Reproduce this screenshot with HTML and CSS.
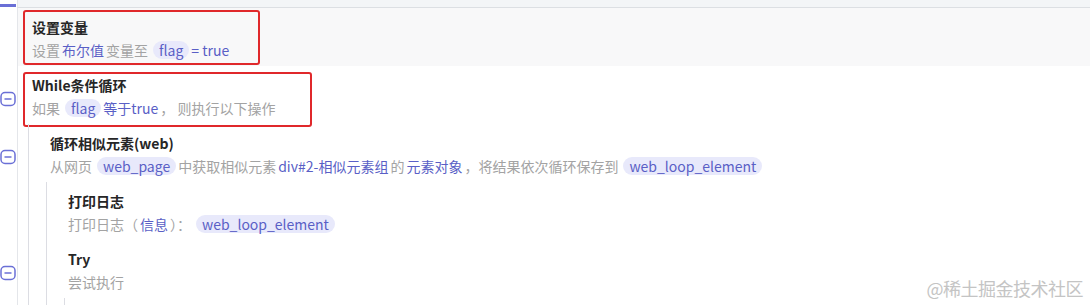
FILE: index.html
```html
<!DOCTYPE html>
<html lang="zh-CN">
<head>
    <meta charset="UTF-8">
    <title>流程编辑器</title>
    <link rel="stylesheet" href="styles.css">
</head>
<body>
    <div class="topbar">
        <div class="tab-mark"><span></span></div>
        <div class="top-rest"></div>
    </div>

    <div class="flow">
        <!-- 设置变量 -->
        <div class="row selected">
            <div class="gutter"></div>
            <div class="body">
                <div class="pad"></div>
                <div class="content">
                    <div class="title">设置变量</div>
                    <div class="desc">设置<span class="hl">布尔值</span>变量至<span class="pill">flag</span><span class="hl tight">= true</span></div>
                </div>
                <div class="frame frame-1"></div>
            </div>
        </div>

        <!-- While -->
        <div class="row">
            <div class="gutter"><span class="fold"><svg viewBox="0 0 16 16" width="16" height="16"><rect x="1" y="1.5" width="14" height="13" rx="4" fill="none" stroke="#6a6fd6" stroke-width="1.5"/><line x1="4.5" y1="8" x2="11.5" y2="8" stroke="#6a6fd6" stroke-width="1.5"/></svg></span></div>
            <div class="body">
                <div class="pad"></div>
                <div class="content">
                    <div class="title">While条件循环</div>
                    <div class="desc">如果<span class="pill">flag</span><span class="hl tight">等于true</span>， 则执行以下操作</div>
                </div>
                <div class="frame frame-2"></div>
            </div>
        </div>

        <!-- 循环相似元素 -->
        <div class="row">
            <div class="gutter"><span class="fold"><svg viewBox="0 0 16 16" width="16" height="16"><rect x="1" y="1.5" width="14" height="13" rx="4" fill="none" stroke="#6a6fd6" stroke-width="1.5"/><line x1="4.5" y1="8" x2="11.5" y2="8" stroke="#6a6fd6" stroke-width="1.5"/></svg></span></div>
            <div class="body">
                <div class="pad"></div>
                <div class="guide"></div>
                <div class="content">
                    <div class="title">循环相似元素(web)</div>
                    <div class="desc">从网页<span class="pill">web_page</span>中获取相似元素<span class="hl">div#2-相似元素组</span>的<span class="hl">元素对象</span>，将结果依次循环保存到<span class="pill">web_loop_element</span></div>
                </div>
            </div>
        </div>

        <!-- 打印日志 -->
        <div class="row">
            <div class="gutter"></div>
            <div class="body">
                <div class="pad"></div>
                <div class="guide"></div>
                <div class="guide"></div>
                <div class="content">
                    <div class="title">打印日志</div>
                    <div class="desc">打印日志（<span class="hl">信息</span>）：<span class="pill">web_loop_element</span></div>
                </div>
            </div>
        </div>

        <!-- Try -->
        <div class="row">
            <div class="gutter"><span class="fold"><svg viewBox="0 0 16 16" width="16" height="16"><rect x="1" y="1.5" width="14" height="13" rx="4" fill="none" stroke="#6a6fd6" stroke-width="1.5"/><line x1="4.5" y1="8" x2="11.5" y2="8" stroke="#6a6fd6" stroke-width="1.5"/></svg></span></div>
            <div class="body">
                <div class="pad"></div>
                <div class="guide"></div>
                <div class="guide"></div>
                <div class="content">
                    <div class="title">Try</div>
                    <div class="desc">尝试执行</div>
                </div>
            </div>
        </div>

        <div class="row row-cut">
            <div class="gutter"></div>
            <div class="body">
                <div class="pad"></div>
                <div class="guide"></div>
                <div class="guide"></div>
                <div class="guide"></div>
            </div>
        </div>
    </div>

    <div class="watermark">@稀土掘金技术社区</div>
</body>
</html>
```

FILE: styles.css
```css
/* 基础 */
* {
    margin: 0;
    padding: 0;
    box-sizing: border-box;
}

body {
    width: 1090px;
    height: 305px;
    overflow: hidden;
    background: #fff;
    font-family: "Noto Sans CJK SC", "Noto Sans", sans-serif;
    font-size: 14px;
    color: #262626;
    position: relative;
}

/* 顶部栏 */
.topbar {
    display: flex;
    height: 8px;
}

.tab-mark {
    width: 17px;
    display: flex;
    align-items: flex-end;
    padding-bottom: 1px;
}

.tab-mark span {
    display: block;
    width: 16px;
    height: 3px;
    background: #6a6fd6;
}

.top-rest {
    flex: 1;
    background: #f3f5f7;
    border-bottom: 1px solid #dcdfe3;
    border-left: 1px solid #e4e6ea;
}

/* 流程行 */
.row {
    display: flex;
    height: 58px;
}

.row-cut {
    height: 7px;
}

.gutter {
    width: 18px;
    border-right: 1px solid #e4e6ea;
    flex-shrink: 0;
}

.fold {
    display: block;
    margin-top: 25px;
    height: 16px;
}

.fold svg {
    display: block;
}

.body {
    flex: 1;
    display: flex;
    position: relative;
}

.row.selected .body {
    background: #f8f8f9;
}

.pad {
    width: 10px;
    flex-shrink: 0;
}

.guide {
    width: 18px;
    flex-shrink: 0;
    border-left: 1px solid #dcdde3;
}

.content {
    padding: 9px 0 0 4px;
}

.title {
    font-weight: bold;
    line-height: 20px;
    height: 20px;
}

.desc {
    margin-top: 3px;
    line-height: 20px;
    color: #a3a3a3;
    white-space: nowrap;
}

.hl {
    color: #5a5fc6;
    margin: 0 2px;
}

.hl.tight {
    margin-left: 0;
}

.pill {
    display: inline-block;
    line-height: 18px;
    padding: 0 6px;
    margin: 0 2px 0 5px;
    border-radius: 9px;
    background: #e8e9fb;
    color: #5a5fc6;
}

/* 标注框 */
.frame {
    position: absolute;
    border: 2px solid #e0282b;
    border-radius: 3px;
}

.frame-1 {
    left: 5px;
    top: 2px;
    width: 237px;
    height: 55px;
}

.frame-2 {
    left: 5px;
    top: 6px;
    width: 289px;
    height: 55px;
}

/* 水印 */
.watermark {
    position: absolute;
    right: 7px;
    bottom: 4px;
    font-size: 18px;
    color: #c4c4c4;
    letter-spacing: -0.5px;
}
```
